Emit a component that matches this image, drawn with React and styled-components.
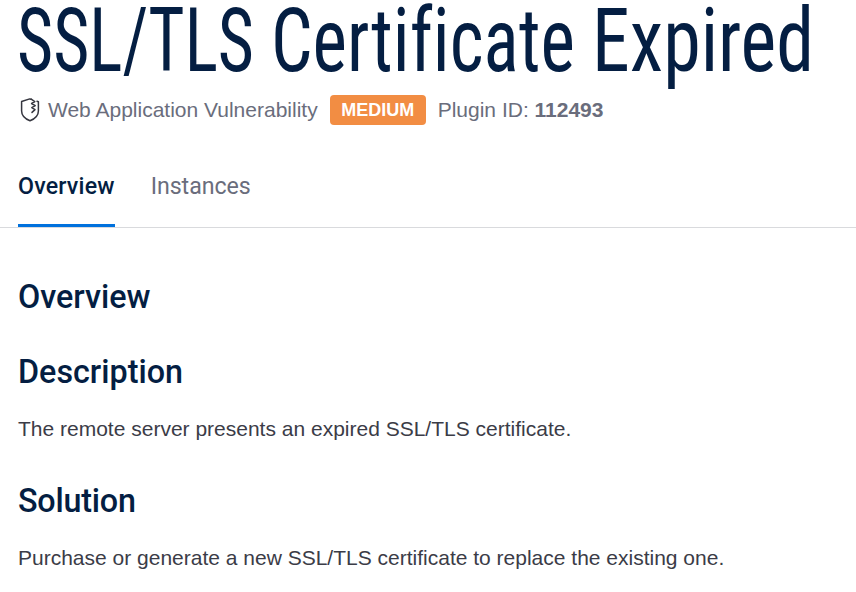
import React from 'react';
import styled, { createGlobalStyle } from 'styled-components';

const GlobalStyle = createGlobalStyle`
  body {
    margin: 0;
    background: #fff;
    overflow: hidden;
  }
`;

const Page = styled.main`
  box-sizing: border-box;
  width: 100%;
  height: 592px;
  overflow: hidden;
  font: 21px 'Liberation Sans', Arial, sans-serif;
  color: #3b3c47;
`;

const Title = styled.h1`
  display: flex;
  height: 81px;
  margin: 0 0 14px 17px;
  font: 430 88.6px/83.4px Roboto, sans-serif;
  font-stretch: 75%;
  font-variant-ligatures: none;
  color: #041e42;
`;

const Word = styled.span`
  flex: none;
  width: ${(p) => p.$width}px;
  white-space: pre;
  transform: scaleX(${(p) => p.$scale});
  transform-origin: left;
`;

const Meta = styled.div`
  display: flex;
  align-items: center;
  height: 30px;
  padding-left: 20px;
  line-height: 30px;
  white-space: nowrap;
  color: #6a6d7c;
`;

const ShieldIcon = styled.svg`
  flex: none;
  width: 20px;
  height: 24px;
  margin-right: 8px;
`;

const Badge = styled.span`
  box-sizing: border-box;
  width: 96px;
  margin: 0 12px;
  border-radius: 4px;
  background: #f28d43;
  color: #fff;
  font-size: 18px;
  font-weight: 700;
  text-align: center;
`;

const Tabs = styled.nav`
  display: flex;
  gap: 36px;
  height: 79px;
  margin-top: 23px;
  padding-left: 18px;
  border-bottom: 1px solid #d9dadd;
`;

const Tab = styled.a`
  box-sizing: border-box;
  height: 79px;
  border-bottom: 3px solid ${(p) => (p.$active ? '#0071dd' : 'transparent')};
  font: ${(p) => (p.$active ? 520 : 430)} 23.2px/76px Roboto, sans-serif;
  letter-spacing: ${(p) => (p.$active ? 0.18 : -0.04)}px;
  color: ${(p) => (p.$active ? '#041e42' : '#6a6d7c')};
`;

const Content = styled.section`
  padding: 49px 18px 0;
`;

const Heading = styled.h2`
  margin: 0 0 ${(p) => p.$gap || 0}px;
  font: 530 32.3px/40px Roboto, sans-serif;
  letter-spacing: ${(p) => p.$tracking || 0}px;
  color: #041e42;
`;

const Text = styled.p`
  margin: 0 0 36px;
  line-height: 32px;
  white-space: nowrap;
`;

export default function App() {
  return (
    <Page>
      <GlobalStyle />
      <Title>
        <Word $width={254} $scale={0.787}>SSL/TLS </Word>
        <Word $width={321} $scale={0.828}>Certificate </Word>
        <Word $width={220} $scale={0.858}>Expired</Word>
      </Title>
      <Meta>
        <ShieldIcon viewBox="0 0 20 24" fill="none" stroke="#35363f" strokeWidth="1.5" strokeLinejoin="round" strokeLinecap="round">
          <path d="M11.2 1.2 9.7.9 1.6 3.5V13C1.6 18.2 6 21.2 10 22.8 14 21.2 18.4 18.2 18.4 13V3.7L17 3.2" />
          <path d="m11.2 1.2 3.6 2.4-3.2 1.9 3.6 2.1-3.4 2 3.2 2-3 2.8" />
        </ShieldIcon>
        <span>Web Application Vulnerability</span>
        <Badge>MEDIUM</Badge>
        <span>Plugin ID: <b>112493</b></span>
      </Meta>
      <Tabs>
        <Tab $active>Overview</Tab>
        <Tab>Instances</Tab>
      </Tabs>
      <Content>
        <Heading $gap={35}>Overview</Heading>
        <Heading $gap={21}>Description</Heading>
        <Text>The remote server presents an expired SSL/TLS certificate.</Text>
        <Heading $gap={21} $tracking={-0.2}>Solution</Heading>
        <Text>Purchase or generate a new SSL/TLS certificate to replace the existing one.</Text>
      </Content>
    </Page>
  );
}
